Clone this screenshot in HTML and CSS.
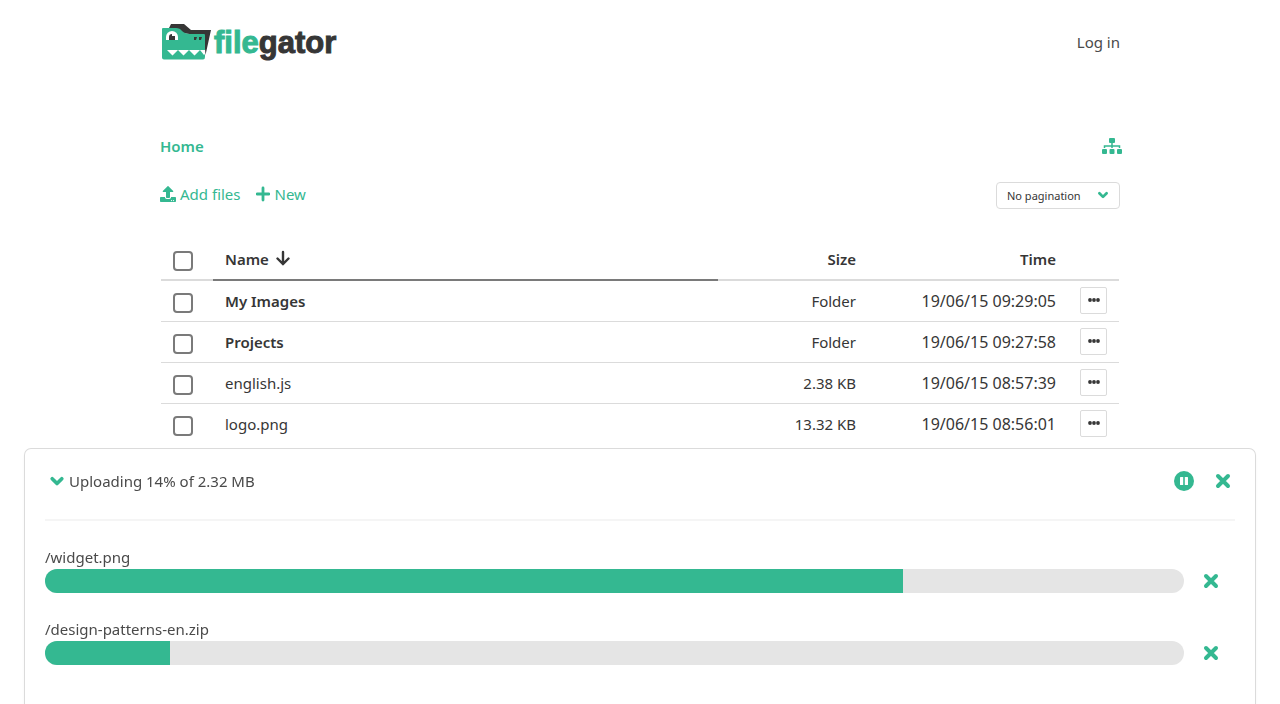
FILE: index.html
```html
<!DOCTYPE html>
<html lang="en">

<head>
    <meta charset="UTF-8" />
    <meta name="viewport" content="width=device-width, initial-scale=1.0" />
    <title>FileGator</title>
    <link rel="stylesheet" href="styles.css">
</head>

<body>
    <!-- shared icons -->
    <svg class="sprite" aria-hidden="true">
        <symbol id="angle-down" viewBox="0 0 14 14">
            <path d="M2.800 5 L7 9.200 L11.200 5" fill="none" stroke="currentColor" stroke-width="3.200" stroke-linecap="round" stroke-linejoin="round" />
        </symbol>
        <symbol id="times" viewBox="0 0 16 16">
            <path d="M3 3 L13 13 M13 3 L3 13" fill="none" stroke="currentColor" stroke-width="4" stroke-linecap="round" />
        </symbol>
        <symbol id="ellipsis" viewBox="0 0 12 12">
            <circle cx="2" cy="6" r="1.900" />
            <circle cx="6" cy="6" r="1.900" />
            <circle cx="10" cy="6" r="1.900" />
        </symbol>
    </svg>

    <div class="container">
        <nav class="navbar">
            <a href="#" class="logo">
                <svg class="logo_img" viewBox="0 0 50 36" aria-hidden="true">
                    <path d="M6 6 L9 0 H22 L29 6 H49 L43.500 31 L42 12 L20 9 Z" fill="#363636" />
                    <path d="M0 5 Q0 4 1 4 H14 Q18 4 20 7 Q23 10 28 10 H42 Q43 10 43 11 V33 Q43 35.500 41 35.500 H2 Q0 35.500 0 33.500 Z" fill="#34b891" />
                    <path d="M4 16 V13 A6 6 0 0 1 16 13 V16 Z" fill="#fff" />
                    <path d="M7 16 V13 Q7 10 10 10 V12 H13 V16 Z" fill="#363636" />
                    <path d="M32 13h3l-1 3h-2z M37 13h3l-1 3h-2z" fill="#363636" />
                    <path d="M5 26h11l-5.500 5.500z M16 26h11l-5.500 5.500z M27 26h11l-5.500 5.500z M38 26h5v4l-1 1z" fill="#fff" />
                </svg>
                <span class="logo_text">file<b>gator</b></span>
            </a>
            <a href="#" class="login">Log in</a>
        </nav>

        <div class="breadcrumb">
            <a href="#" class="home">Home</a>
            <button class="icon_btn tree" aria-label="Choose folder">
                <svg viewBox="0 0 20 16" width="20" height="16" fill="currentColor">
                    <rect x="7" y="0" width="6" height="5" rx="1" />
                    <rect x="0" y="11" width="5" height="5" rx="1" />
                    <rect x="7.500" y="11" width="5" height="5" rx="1" />
                    <rect x="15" y="11" width="5" height="5" rx="1" />
                    <path d="M10 4 V10 M2.500 10 V8 H17.500 V10" fill="none" stroke="currentColor" stroke-width="1.500" />
                </svg>
            </button>
        </div>

        <div class="toolbar">
            <div class="actions">
                <a href="#" class="action">
                    <svg viewBox="0 0 512 512" width="16" height="16" fill="currentColor">
                        <path d="M296 384h-80c-13.300 0-24-10.700-24-24V192h-87.700c-17.800 0-26.700-21.500-14.100-34.100L242.300 5.700c7.500-7.500 19.800-7.500 27.300 0l152.200 152.200c12.600 12.600 3.700 34.100-14.100 34.100H320v168c0 13.300-10.700 24-24 24zm216-8v112c0 13.300-10.700 24-24 24H24c-13.300 0-24-10.700-24-24V376c0-13.300 10.700-24 24-24h136v8c0 30.900 25.100 56 56 56h80c30.900 0 56-25.100 56-56v-8h136c13.300 0 24 10.700 24 24zm-124 88c0-11-9-20-20-20s-20 9-20 20 9 20 20 20 20-9 20-20zm64 0c0-11-9-20-20-20s-20 9-20 20 9 20 20 20 20-9 20-20z" />
                    </svg>
                    Add files
                </a>
                <a href="#" class="action">
                    <svg viewBox="0 0 14 16" width="14" height="16">
                        <path d="M7 2 V14 M1 8 H13" stroke="currentColor" stroke-width="2.800" stroke-linecap="round" />
                    </svg>
                    New
                </a>
            </div>
            <div class="select">
                <select aria-label="Pagination">
                    <option>No pagination</option>
                </select>
                <svg class="select_arrow" width="12" height="12"><use href="#angle-down" /></svg>
            </div>
        </div>

        <table class="files">
            <thead>
                <tr>
                    <th class="col_check"><input type="checkbox" aria-label="Select all" /></th>
                    <th class="col_name sorted">
                        <span class="sort">Name
                            <svg viewBox="0 0 14 18" width="14" height="18">
                                <path d="M7 2 V14 M1.500 8.500 L7 14 L12.500 8.500" fill="none" stroke="currentColor" stroke-width="2.400" stroke-linecap="round" />
                            </svg>
                        </span>
                    </th>
                    <th class="col_size">Size</th>
                    <th class="col_time">Time</th>
                    <th class="col_more"></th>
                </tr>
            </thead>
            <tbody>
                <tr>
                    <td><input type="checkbox" aria-label="Select My Images" /></td>
                    <td><a href="#" class="folder">My Images</a></td>
                    <td class="right">Folder</td>
                    <td class="right time">19/06/15 09:29:05</td>
                    <td><button class="more" aria-label="More"><svg width="12" height="12"><use href="#ellipsis" /></svg></button></td>
                </tr>
                <tr>
                    <td><input type="checkbox" aria-label="Select Projects" /></td>
                    <td><a href="#" class="folder">Projects</a></td>
                    <td class="right">Folder</td>
                    <td class="right time">19/06/15 09:27:58</td>
                    <td><button class="more" aria-label="More"><svg width="12" height="12"><use href="#ellipsis" /></svg></button></td>
                </tr>
                <tr>
                    <td><input type="checkbox" aria-label="Select english.js" /></td>
                    <td><a href="#">english.js</a></td>
                    <td class="right">2.38 KB</td>
                    <td class="right time">19/06/15 08:57:39</td>
                    <td><button class="more" aria-label="More"><svg width="12" height="12"><use href="#ellipsis" /></svg></button></td>
                </tr>
                <tr>
                    <td><input type="checkbox" aria-label="Select logo.png" /></td>
                    <td><a href="#">logo.png</a></td>
                    <td class="right">13.32 KB</td>
                    <td class="right time">19/06/15 08:56:01</td>
                    <td><button class="more" aria-label="More"><svg width="12" height="12"><use href="#ellipsis" /></svg></button></td>
                </tr>
            </tbody>
        </table>
    </div>

    <div class="upload_box">
        <div class="upload_header">
            <button class="icon_btn toggle">
                <svg width="16" height="16"><use href="#angle-down" /></svg>
                <span>Uploading 14% of 2.32 MB</span>
            </button>
            <div class="upload_controls">
                <button class="icon_btn" aria-label="Pause">
                    <svg viewBox="0 0 20 20" width="20" height="20">
                        <circle cx="10" cy="10" r="10" fill="currentColor" />
                        <rect x="6" y="6" width="3.200" height="8" rx="0.500" fill="#fff" />
                        <rect x="10.800" y="6" width="3.200" height="8" rx="0.500" fill="#fff" />
                    </svg>
                </button>
                <button class="icon_btn" aria-label="Close"><svg width="16" height="16"><use href="#times" /></svg></button>
            </div>
        </div>
        <div class="upload_list">
            <div class="upload_row">
                <div class="upload_file">
                    <label for="file1">/widget.png</label>
                    <progress id="file1" value="858" max="1139"></progress>
                </div>
                <button class="icon_btn" aria-label="Cancel /widget.png"><svg width="16" height="16"><use href="#times" /></svg></button>
            </div>
            <div class="upload_row">
                <div class="upload_file">
                    <label for="file2">/design-patterns-en.zip</label>
                    <progress id="file2" value="125" max="1139"></progress>
                </div>
                <button class="icon_btn" aria-label="Cancel /design-patterns-en.zip"><svg width="16" height="16"><use href="#times" /></svg></button>
            </div>
        </div>
    </div>
</body>

</html>
```
FILE: styles.css
```css
* {
    box-sizing: border-box;
}

body {
    margin: 0;
    background: #fff;
    color: #363636;
    font-family: "Noto Sans", "Open Sans", sans-serif;
    font-size: 15px;
    line-height: 24px;
}

a {
    color: inherit;
    text-decoration: none;
}

svg {
    display: block;
    flex-shrink: 0;
}

button,
select {
    font: inherit;
    color: inherit;
    cursor: pointer;
}

.sprite {
    position: absolute;
    width: 0;
    height: 0;
}

.container {
    max-width: 960px;
    margin: 0 auto;
}

.navbar {
    display: flex;
    align-items: center;
    justify-content: space-between;
    height: 84px;
    color: #4a4a4a;
}

.logo {
    display: flex;
    align-items: center;
    gap: 2px;
    padding-left: 2px;
}

.logo_img {
    width: 50px;
    height: 36px;
}

.logo_text {
    padding-top: 2px;
    color: #34b891;
    font-family: "Liberation Sans", Arial, sans-serif;
    font-size: 31px;
    font-weight: bold;
    line-height: 32px;
    -webkit-text-stroke: 1px currentColor;
}

.logo_text b {
    color: #363636;
}

.breadcrumb {
    display: flex;
    align-items: center;
    justify-content: space-between;
    margin-top: 50px;
    margin-right: -2px;
    color: #34b891;
}

.home {
    font-weight: 600;
}

.icon_btn {
    display: flex;
    align-items: center;
    padding: 0;
    border: 0;
    background: none;
    color: #34b891;
}

.toolbar {
    display: flex;
    align-items: flex-start;
    justify-content: space-between;
    margin-top: 24px;
}

.actions {
    display: flex;
    gap: 16px;
    color: #34b891;
}

.action {
    display: flex;
    align-items: center;
    gap: 4px;
}

.select {
    position: relative;
}

.select select {
    display: block;
    width: 124px;
    height: 27px;
    padding: 0 10px;
    border: 1px solid #dbdbdb;
    border-radius: 4px;
    background: #fff;
    font-size: 11px;
    appearance: none;
}

.select_arrow {
    position: absolute;
    top: 7px;
    right: 11px;
    color: #34b891;
    pointer-events: none;
}

.files {
    width: 100%;
    margin-top: 30px;
    padding: 0 1px;
    border-spacing: 0;
    table-layout: fixed;
}

.files th,
.files td {
    height: 41px;
    padding: 0 12px;
    border-bottom: 1px solid #dbdbdb;
    text-align: left;
    vertical-align: middle;
}

.files tbody tr:last-child td {
    border-bottom-color: transparent;
}

.files th {
    height: 42px;
    border-bottom-width: 2px;
    font-weight: 600;
}

.files th.sorted {
    border-bottom-color: #7a7a7a;
}

.files .right,
.files .col_size,
.files .col_time {
    text-align: right;
}

.files .time {
    font-size: 16px;
}

.col_check {
    width: 52px;
}

.col_size {
    width: 150px;
}

.col_time {
    width: 200px;
}

.col_more {
    width: 51px;
}

.sort {
    display: flex;
    align-items: center;
    gap: 7px;
}

.folder {
    font-weight: 600;
}

.files input {
    display: block;
    width: 20px;
    height: 20px;
    margin: 4px 0 0;
    border: 2px solid #7a7a7a;
    border-radius: 4px;
    appearance: none;
}

.more {
    display: flex;
    align-items: center;
    justify-content: center;
    width: 27px;
    height: 27px;
    margin-bottom: 2px;
    padding: 0;
    border: 1px solid #dbdbdb;
    border-radius: 2px;
    background: #fff;
}

.more svg {
    fill: #363636;
}

.upload_box {
    position: fixed;
    right: 25px;
    bottom: 0;
    left: 25px;
    padding: 20px 20px 15px;
    border-radius: 6px 6px 0 0;
    background: #fff;
    box-shadow: 0 0 0 1px #dbdbdb, 0 2px 3px rgba(10, 10, 10, 0.1);
    color: #4a4a4a;
}

.upload_header {
    display: flex;
    align-items: center;
    justify-content: space-between;
    padding: 0 4px 26px;
    height: 52px;
    border-bottom: 2px solid #f5f5f5;
}

.toggle {
    gap: 4px;
}

.toggle span {
    color: #4a4a4a;
}

.upload_controls {
    display: flex;
    align-items: center;
    gap: 21px;
}

.upload_list {
    padding-top: 24px;
}

.upload_row {
    display: flex;
    align-items: flex-end;
    gap: 19px;
    margin-bottom: 24px;
    padding-right: 16px;
}

.upload_row .icon_btn {
    height: 24px;
}

.upload_file {
    flex: 1;
}

.upload_file label {
    display: block;
}

.upload_file progress {
    display: block;
    width: 100%;
    height: 24px;
    border: 0;
    border-radius: 12px;
    background: #e5e5e5;
    overflow: hidden;
    appearance: none;
}

.upload_file progress::-webkit-progress-bar {
    background: #e5e5e5;
}

.upload_file progress::-webkit-progress-value {
    background: #34b891;
}
```
